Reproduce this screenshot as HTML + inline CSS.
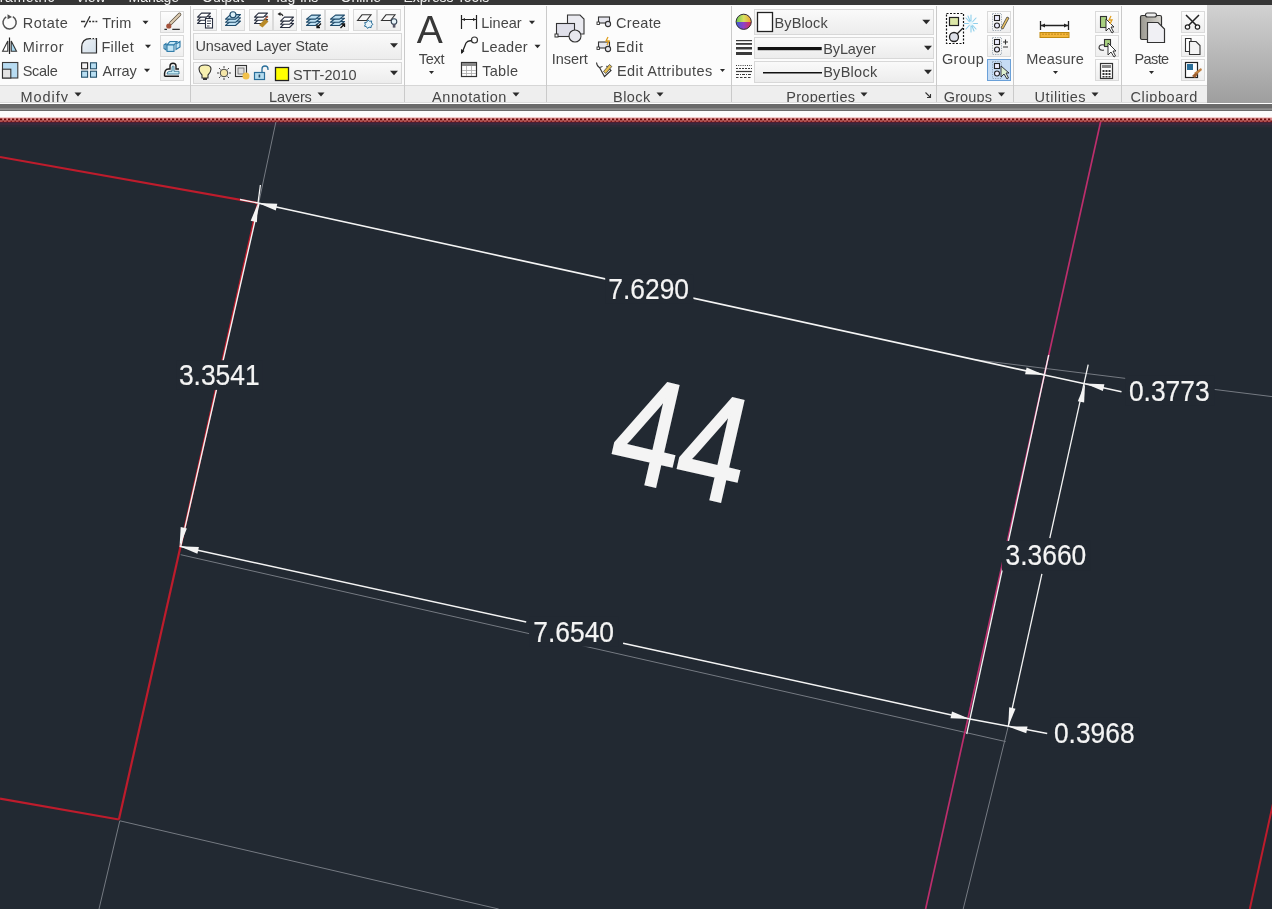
<!DOCTYPE html>
<html><head><meta charset="utf-8"><style>
html,body{margin:0;padding:0}
body{width:1272px;height:909px;overflow:hidden;position:relative;background:#222932;font-family:"Liberation Sans",sans-serif;}
.a{position:absolute}
</style></head><body>
<svg class="a" style="left:0;top:0;will-change:transform" width="1272" height="128" viewBox="0 0 1272 128" font-family="Liberation Sans"><defs><linearGradient id="bg" x1="0" y1="0" x2="0" y2="1"><stop offset="0" stop-color="#fdfdfd"/><stop offset="1" stop-color="#eeeeee"/></linearGradient><linearGradient id="cb" x1="0" y1="0" x2="0" y2="1"><stop offset="0" stop-color="#fafafa"/><stop offset="1" stop-color="#ececec"/></linearGradient><pattern id="rd" x="0" y="118" width="4" height="4" patternUnits="userSpaceOnUse"><rect x="0" y="0" width="4" height="4" fill="#d88888"/><rect x="0" y="0.5" width="2.2" height="2" fill="#6a0808"/><rect x="2.2" y="2.5" width="1.8" height="1.5" fill="#7a1818"/><rect x="0" y="2.5" width="2.2" height="1.5" fill="#b05050"/></pattern><linearGradient id="gr" x1="0" y1="0" x2="0" y2="1"><stop offset="0" stop-color="#d2d2d2"/><stop offset="1" stop-color="#9e9e9e"/></linearGradient><clipPath id="rc"><rect x="0" y="0" width="1272" height="128"/></clipPath></defs><g clip-path="url(#rc)"><rect x="0" y="0" width="1272" height="122" fill="#ffffff" /><rect x="0" y="5" width="1272" height="98" fill="#fcfcfc" /><rect x="0" y="85" width="1207" height="18" fill="#eeeeee" /><rect x="0" y="85" width="1207" height="1" fill="#d6d6d6" /><rect x="0" y="102" width="1207" height="1" fill="#dcdcdc" /><rect x="1207" y="5" width="65" height="98" fill="url(#gr)" /><rect x="0" y="0" width="1272" height="5" fill="#363636" /><text x="-18.6" y="1.9" font-size="14" fill="#f0f0f0" letter-spacing="0.6" >Parametric</text><text x="75.5" y="1.9" font-size="14" fill="#f0f0f0" letter-spacing="0" >View</text><text x="128.5" y="1.9" font-size="14" fill="#f0f0f0" letter-spacing="0" >Manage</text><text x="202" y="1.9" font-size="14" fill="#f0f0f0" letter-spacing="0" >Output</text><text x="267" y="1.9" font-size="14" fill="#f0f0f0" letter-spacing="0.1" >Plug-ins</text><text x="340.5" y="1.9" font-size="14" fill="#f0f0f0" letter-spacing="0" >Online</text><text x="403.5" y="1.9" font-size="14" fill="#f0f0f0" letter-spacing="-0.1" >Express Tools</text><rect x="190" y="6" width="1" height="97" fill="#cacaca" /><rect x="404" y="6" width="1" height="97" fill="#cacaca" /><rect x="546" y="6" width="1" height="97" fill="#cacaca" /><rect x="731" y="6" width="1" height="97" fill="#cacaca" /><rect x="936" y="6" width="1" height="97" fill="#cacaca" /><rect x="1013" y="6" width="1" height="97" fill="#cacaca" /><rect x="1121" y="6" width="1" height="97" fill="#cacaca" /><path d="M6.2,16.8 A6.6,6.6 0 1 0 12.8,16.7" fill="none" stroke="#505050" stroke-width="1.5"/><polygon points="7.5,14.2 12,17 7.6,19.2" fill="#505050"/><text x="22.7" y="27.6" font-size="14.5" fill="#464646" letter-spacing="0.48" >Rotate</text><path d="M9.5,37.5 L9.5,54" stroke="#222" stroke-width="1.2"/><path d="M7.8,41 L2.6,51.3 L7.8,51.3 Z" fill="#fff" stroke="#333" stroke-width="1.1"/><path d="M11.2,41 L16.5,51.3 L11.2,51.3 Z" fill="#a8d8f0" stroke="#333" stroke-width="1.1"/><text x="22.7" y="51.5" font-size="14.5" fill="#464646" letter-spacing="0.6" >Mirror</text><rect x="2.5" y="62.5" width="15.3" height="15.5" fill="#b8dcf2" stroke="#3a3a3a" stroke-width="1.1"/><rect x="2.5" y="69.2" width="8.3" height="8.8" fill="#e4e4e4" stroke="#333" stroke-width="1.1"/><text x="22.7" y="75.7" font-size="14.5" fill="#464646" letter-spacing="-0.3" >Scale</text><path d="M81,21.5 L85.2,21.5 M90,16.2 L84.3,27.4 M89,21.5 L91,21.5 M92.3,21.5 L94.3,21.5 M95.5,21.5 L97.3,21.5" stroke="#333" stroke-width="1.3" fill="none"/><text x="102.2" y="27.6" font-size="14.5" fill="#464646" letter-spacing="0.267" >Trim</text><polygon points="142.5,20.75 148.5,20.75 145.5,24.25" fill="#2a2a2a"/><defs><linearGradient id="fl" x1="0" y1="0" x2="1" y2="1"><stop offset="0" stop-color="#eef2f6"/><stop offset="1" stop-color="#d2dfea"/></linearGradient></defs><path d="M81.7,53 L81.7,47 Q82,38.7 90,38.7 L96.5,38.7 L96.5,53 Z" fill="url(#fl)" stroke="#2a2a2a" stroke-width="1.2"/><path d="M89.5,38.7 L96.5,38.7" stroke="#fff" stroke-width="1.2" stroke-dasharray="0,1.6,1.4,0"/><text x="101.4" y="51.5" font-size="14.5" fill="#464646" letter-spacing="0.36" >Fillet</text><polygon points="145.0,44.75 151.0,44.75 148,48.25" fill="#2a2a2a"/><g fill="#b8def2" stroke="#24506a" stroke-width="1.1"><rect x="90.5" y="62.8" width="6" height="6"/><rect x="81.6" y="71.2" width="6" height="6"/><rect x="90.5" y="71.2" width="6" height="6"/></g><rect x="81.6" y="62.8" width="6" height="6" fill="#f4f4f4" stroke="#222" stroke-width="1.1"/><text x="102.4" y="75.7" font-size="14.5" fill="#464646" letter-spacing="-0.05" >Array</text><polygon points="144.0,68.75 150.0,68.75 147,72.25" fill="#2a2a2a"/><rect x="160.5" y="11.5" width="23" height="21" fill="url(#bg)" stroke="#dadada" stroke-width="1"/><rect x="160.5" y="35.5" width="23" height="21" fill="url(#bg)" stroke="#dadada" stroke-width="1"/><rect x="160.5" y="59.5" width="23" height="21" fill="url(#bg)" stroke="#dadada" stroke-width="1"/><path d="M171,23 L179.5,14.5" stroke="#5a5040" stroke-width="3.6" stroke-linecap="round"/><path d="M171,23 L179.5,14.5" stroke="#dccbb0" stroke-width="2.2" stroke-linecap="round"/><circle cx="168.8" cy="26" r="2.6" fill="#a4523a"/><path d="M164.4,29.4 L167,29.4 M172.3,29.4 L179.8,29.4" stroke="#333" stroke-width="1.1"/><g fill="#c4e6f6" stroke="#2a78a6" stroke-width="1.1"><rect x="167" y="44.8" width="7" height="6.6"/><path d="M167,44.8 L170,41.5 L177,41.5 L174,44.8 Z"/><path d="M164,45 L166,43.5 L166,50 L164,48.5 Z"/><path d="M176,44 L180,41.5 L180,47 L176,49.5 Z"/></g><path d="M164.5,76.3 L179,76.3 M164.5,76.3 Q164,69 168.5,69 L170,69 L170,66 Q170,63.2 173,63.2 Q176,63.2 176,66 L176,69 L179,69" fill="none" stroke="#1a1a1a" stroke-width="1.4"/><path d="M167,74 Q167,71.3 170,71.3 L172,71.3 L172,68 Q172,65.5 173.5,66 Q174,66 174,68 L174,71.3 L179,71.3 L179,74 Z" fill="#c8ecf4" stroke="#2a6a8a" stroke-width="0.8"/><text x="20.4" y="101.5" font-size="14.5" fill="#464646" letter-spacing="1.0" >Modify</text><polygon points="74.5,92.5 81.5,92.5 78,96.5" fill="#2a2a2a"/><rect x="193.5" y="9.5" width="23" height="21" fill="url(#bg)" stroke="#dadada" stroke-width="1"/><rect x="221.5" y="9.5" width="23" height="21" fill="url(#bg)" stroke="#dadada" stroke-width="1"/><rect x="249.5" y="9.5" width="23" height="21" fill="url(#bg)" stroke="#dadada" stroke-width="1"/><rect x="273.5" y="9.5" width="23" height="21" fill="url(#bg)" stroke="#dadada" stroke-width="1"/><rect x="301.5" y="9.5" width="23" height="21" fill="url(#bg)" stroke="#dadada" stroke-width="1"/><rect x="325.5" y="9.5" width="23" height="21" fill="url(#bg)" stroke="#dadada" stroke-width="1"/><rect x="353.5" y="9.5" width="23" height="21" fill="url(#bg)" stroke="#dadada" stroke-width="1"/><rect x="377.5" y="9.5" width="23" height="21" fill="url(#bg)" stroke="#dadada" stroke-width="1"/><path d="M197.5,23.5 L206.5,23.5 L210.5,19.5 L201.5,19.5 Z" fill="#fff" stroke="#2a3040" stroke-width="1.1" stroke-linejoin="round"/><path d="M197.5,20.3 L206.5,20.3 L210.5,16.3 L201.5,16.3 Z" fill="#fff" stroke="#2a3040" stroke-width="1.1" stroke-linejoin="round"/><path d="M197.5,17.1 L206.5,17.1 L210.5,13.100000000000001 L201.5,13.100000000000001 Z" fill="#fff" stroke="#2a3040" stroke-width="1.1" stroke-linejoin="round"/><rect x="205.5" y="18.5" width="7" height="9.5" fill="#fff" stroke="#2a3040" stroke-width="1.1"/><path d="M207,21 L211,21 M207,23.5 L211,23.5 M207,26 L209.5,26" stroke="#2a3040" stroke-width="0.9"/><path d="M225.5,25.5 L235.5,25.5 L240.5,21.0 L230.5,21.0 Z" fill="#bfe0f2" stroke="#1e4a6a" stroke-width="1.1" stroke-linejoin="round"/><path d="M225.5,22.3 L235.5,22.3 L240.5,17.8 L230.5,17.8 Z" fill="#bfe0f2" stroke="#1e4a6a" stroke-width="1.1" stroke-linejoin="round"/><path d="M225.5,19.1 L235.5,19.1 L240.5,14.600000000000001 L230.5,14.600000000000001 Z" fill="#bfe0f2" stroke="#1e4a6a" stroke-width="1.1" stroke-linejoin="round"/><circle cx="233" cy="14.8" r="3" fill="#d8eef8" stroke="#1e4a6a" stroke-width="1.1"/><path d="M254.5,23.5 L263.5,23.5 L267.5,19.5 L258.5,19.5 Z" fill="#fff" stroke="#2a3040" stroke-width="1.1" stroke-linejoin="round"/><path d="M254.5,20.3 L263.5,20.3 L267.5,16.3 L258.5,16.3 Z" fill="#fff" stroke="#2a3040" stroke-width="1.1" stroke-linejoin="round"/><path d="M254.5,17.1 L263.5,17.1 L267.5,13.100000000000001 L258.5,13.100000000000001 Z" fill="#fff" stroke="#2a3040" stroke-width="1.1" stroke-linejoin="round"/><path d="M259,25 L265,19 L268.5,21.5 L262.5,27.5 Z" fill="#b88a28"/><path d="M265,19 L268,16.5" stroke="#c06040" stroke-width="1.2"/><path d="M280.5,27.5 L289.5,27.5 L293.5,23.5 L284.5,23.5 Z" fill="#fff" stroke="#2a3040" stroke-width="1.1" stroke-linejoin="round"/><path d="M280.5,24.3 L289.5,24.3 L293.5,20.3 L284.5,20.3 Z" fill="#fff" stroke="#2a3040" stroke-width="1.1" stroke-linejoin="round"/><path d="M280.5,21.1 L289.5,21.1 L293.5,17.1 L284.5,17.1 Z" fill="#fff" stroke="#2a3040" stroke-width="1.1" stroke-linejoin="round"/><path d="M283,16 Q282,13.5 279,14" fill="none" stroke="#222" stroke-width="1.1"/><polygon points="277.5,14 280.5,12 280.5,16" fill="#222"/><path d="M306.5,25.5 L315.5,25.5 L320.5,21.5 L311.5,21.5 Z" fill="#bfe0f2" stroke="#1e4a6a" stroke-width="1.1" stroke-linejoin="round"/><path d="M306.5,22.3 L315.5,22.3 L320.5,18.3 L311.5,18.3 Z" fill="#bfe0f2" stroke="#1e4a6a" stroke-width="1.1" stroke-linejoin="round"/><path d="M306.5,19.1 L315.5,19.1 L320.5,15.100000000000001 L311.5,15.100000000000001 Z" fill="#bfe0f2" stroke="#1e4a6a" stroke-width="1.1" stroke-linejoin="round"/><path d="M321,23.5 L317,27.5 M317,24.5 L317,27.5 L320,27.5" stroke="#111" stroke-width="1.3" fill="none"/><path d="M330.5,25.5 L339.5,25.5 L344.5,21.5 L335.5,21.5 Z" fill="#bfe0f2" stroke="#1e4a6a" stroke-width="1.1" stroke-linejoin="round"/><path d="M330.5,22.3 L339.5,22.3 L344.5,18.3 L335.5,18.3 Z" fill="#bfe0f2" stroke="#1e4a6a" stroke-width="1.1" stroke-linejoin="round"/><path d="M330.5,19.1 L339.5,19.1 L344.5,15.100000000000001 L335.5,15.100000000000001 Z" fill="#bfe0f2" stroke="#1e4a6a" stroke-width="1.1" stroke-linejoin="round"/><path d="M340.5,28 L344.5,24 M341.5,24 L344.5,24 L344.5,27" stroke="#111" stroke-width="1.3" fill="none"/><path d="M357.5,20.5 L362,14.8 L371,14.8 L366.5,20.5 Z" fill="none" stroke="#333" stroke-width="1.1"/><path d="M368,20 l1.6,1.3 l2,-0.4 l-0.1,2 l1.4,1.5 l-1.6,1.2 l-0.2,2 l-2,-0.4 l-1.6,1.2 l-1,-1.7 l-2,-0.5 l0.8,-1.8 l-0.6,-1.9 l2,-0.2 Z" fill="#e8f4fa" stroke="#2a6f9a" stroke-width="1"/><path d="M381.5,20.5 L386,14.8 L395,14.8 L390.5,20.5 Z" fill="none" stroke="#333" stroke-width="1.1"/><circle cx="394" cy="21.5" r="2.8" fill="#e8f4fa" stroke="#345" stroke-width="1.1"/><rect x="392.8" y="24" width="2.6" height="3.6" fill="#556"/><rect x="193.5" y="33.5" width="208" height="26" fill="url(#cb)" stroke="#d8d8d8" stroke-width="1"/><text x="195.5" y="51.4" font-size="14.5" fill="#464646" letter-spacing="-0.134" >Unsaved Layer State</text><polygon points="390.0,43.25 398.0,43.25 394,47.75" fill="#2a2a2a"/><rect x="193.5" y="62.5" width="208" height="21" fill="url(#cb)" stroke="#d8d8d8" stroke-width="1"/><path d="M202,78 L202,75 Q199,72 199,69 Q199,65 205,65 Q211,65 211,69 Q211,72 208,75 L208,78 Z" fill="#f8f0b0" stroke="#333" stroke-width="1.1"/><rect x="203" y="78" width="4" height="2" fill="#333"/><circle cx="224" cy="73" r="3.8" fill="#f5e6a8" stroke="#444" stroke-width="1"/><g stroke="#444" stroke-width="1"><path d="M224,66 L224,68 M224,78 L224,80 M217,73 L219,73 M229,73 L231,73 M219,68 L220.5,69.5 M227.5,76.5 L229,78 M229,68 L227.5,69.5 M219,78 L220.5,76.5"/></g><rect x="235.5" y="65.5" width="11" height="11" fill="#eee" stroke="#333" stroke-width="1.1"/><rect x="238" y="68" width="6" height="6" fill="#ddd" stroke="#666" stroke-width="0.8"/><circle cx="246" cy="76" r="3.5" fill="#f2c14a"/><rect x="254.5" y="72.5" width="10" height="7" fill="#b5dcef" stroke="#2a6f9a" stroke-width="1.2"/><path d="M262,72 L262,69 Q262,66 265,66 Q268,66 268,69 L268,70" fill="none" stroke="#2a6f9a" stroke-width="1.3"/><rect x="258.6" y="74.5" width="1.6" height="3" fill="#2a4f6a"/><rect x="275.5" y="67.5" width="13" height="13" fill="#ffff00" stroke="#222" stroke-width="1.3"/><text x="293.0" y="80.4" font-size="14.5" fill="#464646" letter-spacing="0.0" >STT-2010</text><polygon points="390.0,70.75 398.0,70.75 394,75.25" fill="#2a2a2a"/><text x="269.1" y="101.5" font-size="14.5" fill="#464646" letter-spacing="-0.16" >Layers</text><polygon points="317.5,92.5 324.5,92.5 321,96.5" fill="#2a2a2a"/><text x="416.8" y="42.9" font-size="39" fill="#383838" letter-spacing="0" >A</text><text x="418.7" y="63.5" font-size="14.5" fill="#464646" letter-spacing="-0.267" >Text</text><polygon points="429.0,71.0 434.0,71.0 431.5,74.0" fill="#2a2a2a"/><path d="M461.5,15 L461.5,29 M476.5,15 L476.5,29 M462,19.5 L476,19.5" stroke="#222" stroke-width="1.2" fill="none"/><path d="M462,19.5 L465,18 L465,21 Z M476,19.5 L473,18 L473,21 Z" fill="#222"/><text x="481.2" y="27.7" font-size="14.5" fill="#464646" letter-spacing="0.04" >Linear</text><polygon points="529.0,20.75 535.0,20.75 532,24.25" fill="#2a2a2a"/><path d="M462,53 L466,43 Q468,40 472,41" stroke="#222" stroke-width="1.3" fill="none"/><path d="M461,54 L461,49 L464.5,51 Z" fill="#222"/><circle cx="474.5" cy="40" r="3" fill="#fff" stroke="#333" stroke-width="1.2"/><text x="481.2" y="51.6" font-size="14.5" fill="#464646" letter-spacing="0.24" >Leader</text><polygon points="534.5,44.75 540.5,44.75 537.5,48.25" fill="#2a2a2a"/><rect x="461.5" y="62.5" width="15" height="14" fill="#fff" stroke="#333" stroke-width="1.2"/><rect x="462" y="63" width="14" height="3" fill="#888"/><path d="M462,70.5 L476,70.5 M462,73.5 L476,73.5 M466.5,66 L466.5,76 M471.5,66 L471.5,76" stroke="#aaa" stroke-width="0.8"/><text x="482.2" y="75.5" font-size="14.5" fill="#464646" letter-spacing="0.3" >Table</text><text x="432.1" y="101.5" font-size="14.5" fill="#464646" letter-spacing="0.556" >Annotation</text><polygon points="512.5,92.5 519.5,92.5 516,96.5" fill="#2a2a2a"/><path d="M567.5,15 L580,15 L584,19 L584,34 L567.5,34 Z" fill="#eaeaf0" stroke="#333" stroke-width="1.1"/><rect x="556.5" y="23.5" width="18" height="13" fill="#e0e0ea" stroke="#333" stroke-width="1.1"/><circle cx="575" cy="36" r="6" fill="#e8e8ee" stroke="#333" stroke-width="1.1"/><rect x="555" y="34" width="3" height="3" fill="#fff" stroke="#333" stroke-width="1"/><text x="551.7" y="63.7" font-size="14.5" fill="#464646" letter-spacing="-0.04" >Insert</text><rect x="598.5" y="17" width="11" height="6" fill="#e6e6ee" stroke="#333" stroke-width="1.1"/><circle cx="608" cy="24" r="2.6" fill="#e6e6ee" stroke="#333" stroke-width="1.1"/><rect x="597" y="22" width="2.5" height="2.5" fill="#fff" stroke="#333" stroke-width="0.9"/><text x="616.0" y="27.5" font-size="14.5" fill="#464646" letter-spacing="0.32" >Create</text><rect x="598.5" y="42" width="11" height="6" fill="#e6e6ee" stroke="#333" stroke-width="1.1"/><circle cx="608" cy="49" r="2.6" fill="#e6e6ee" stroke="#333" stroke-width="1.1"/><rect x="597" y="47" width="2.5" height="2.5" fill="#fff" stroke="#333" stroke-width="0.9"/><path d="M608,37 L606,41 L609,41 L607,45" stroke="#e0a020" stroke-width="1.3" fill="none"/><text x="616.0" y="51.6" font-size="14.5" fill="#464646" letter-spacing="0.667" >Edit</text><path d="M596.5,62.5 Q597,66.5 599.5,67.5 L604.5,76.5 L611,70.5 L606.5,66" fill="none" stroke="#333" stroke-width="1.1"/><path d="M603.5,71.5 L609.5,64.5 L611.8,66.5 L605.8,73.5 Z" fill="#e8c050" stroke="#444" stroke-width="0.8"/><path d="M599.5,67.5 L602.5,66.5" stroke="#333" stroke-width="1"/><text x="617.0" y="75.5" font-size="14.5" fill="#464646" letter-spacing="0.414" >Edit Attributes</text><polygon points="720.0,69.0 725.0,69.0 722.5,72.0" fill="#2a2a2a"/><text x="613.1" y="101.5" font-size="14.5" fill="#464646" letter-spacing="0.4" >Block</text><polygon points="656.5,92.5 663.5,92.5 660,96.5" fill="#2a2a2a"/><defs><linearGradient id="cw" x1="0" y1="0" x2="0" y2="1"><stop offset="0" stop-color="#8fd060"/><stop offset="0.35" stop-color="#f0c040"/><stop offset="0.5" stop-color="#e04040"/><stop offset="0.75" stop-color="#7040c0"/><stop offset="1" stop-color="#4060d0"/></linearGradient></defs><defs><linearGradient id="cwt" x1="0" y1="0" x2="1" y2="0"><stop offset="0" stop-color="#6ac850"/><stop offset="0.5" stop-color="#d8e060"/><stop offset="1" stop-color="#f0a030"/></linearGradient><linearGradient id="cwb" x1="0" y1="0" x2="1" y2="0"><stop offset="0" stop-color="#3a60d0"/><stop offset="0.5" stop-color="#9040c8"/><stop offset="1" stop-color="#e03040"/></linearGradient></defs><circle cx="743.7" cy="21.8" r="7.6" fill="url(#cwb)"/><path d="M736.1,22.1 A7.6,7.6 0 0 1 751.3,22.1 Z" fill="url(#cwt)"/><circle cx="743.7" cy="21.8" r="7.6" fill="none" stroke="#333" stroke-width="1"/><rect x="754.5" y="9.5" width="179" height="25" fill="url(#cb)" stroke="#d8d8d8" stroke-width="1"/><rect x="754.5" y="37.5" width="179" height="21" fill="url(#cb)" stroke="#d8d8d8" stroke-width="1"/><rect x="754.5" y="61.5" width="179" height="21" fill="url(#cb)" stroke="#d8d8d8" stroke-width="1"/><rect x="757.5" y="12.5" width="15" height="19" fill="#fff" stroke="#222" stroke-width="1.3"/><text x="774.4" y="27.8" font-size="14.5" fill="#464646" letter-spacing="0.167" >ByBlock</text><polygon points="922.3,19.75 930.3,19.75 926.3,24.25" fill="#2a2a2a"/><g fill="#3a3a3a"><rect x="736" y="40" width="16" height="1.2"/><rect x="736" y="43" width="16" height="1.8"/><rect x="736" y="47" width="16" height="2.5"/><rect x="736" y="52" width="16" height="3"/></g><rect x="757.7" y="47" width="64" height="3.2" fill="#111" /><text x="823.2" y="53.8" font-size="14.5" fill="#464646" letter-spacing="-0.1" >ByLayer</text><polygon points="924.0,45.75 932.0,45.75 928,50.25" fill="#2a2a2a"/><g stroke="#3a3a3a" stroke-width="1.2"><path d="M736,65.5 L752,65.5" stroke-dasharray="1,1.2"/><path d="M736,68.5 L752,68.5" stroke-dasharray="2,1"/><path d="M736,71.5 L752,71.5"/><path d="M736,74.5 L752,74.5" stroke-dasharray="3,1,1,1"/><path d="M736,77.5 L752,77.5" stroke-dasharray="2.5,1.5"/></g><rect x="763" y="72" width="59" height="1.5" fill="#111" /><text x="823.2" y="77.4" font-size="14.5" fill="#464646" letter-spacing="0.266" >ByBlock</text><polygon points="924.0,69.75 932.0,69.75 928,74.25" fill="#2a2a2a"/><text x="786.3" y="101.5" font-size="14.5" fill="#464646" letter-spacing="0.289" >Properties</text><polygon points="860.5,92.5 867.5,92.5 864,96.5" fill="#2a2a2a"/><path d="M925.5,92.5 L930.5,97.5 M930.5,94 L930.5,97.5 L927,97.5" stroke="#333" stroke-width="1.1" fill="none"/><rect x="946.5" y="13.5" width="17" height="30" fill="none" stroke="#111" stroke-width="1.2" stroke-dasharray="2,1.5"/><rect x="949.5" y="17.5" width="9" height="8" fill="#dde8a8" stroke="#222" stroke-width="1.2"/><circle cx="954" cy="37" r="4.5" fill="#dde0e8" stroke="#222" stroke-width="1.3"/><path d="M957,34 L963,28" stroke="#222" stroke-width="1.2"/><g stroke="#8fd0ec" stroke-width="1.1" stroke-linecap="round"><path d="M964.5,23.5 L977.5,23.5 M971,15 L971,32 M966,18 L976,29 M976,18 L966,29 M968,16 L974,31"/></g><circle cx="971" cy="23.5" r="2.2" fill="#e6f6fc"/><text x="941.9" y="63.5" font-size="14.5" fill="#464646" letter-spacing="0.4" >Group</text><rect x="987.5" y="11.5" width="23" height="21" fill="url(#bg)" stroke="#dadada" stroke-width="1"/><rect x="987.5" y="35.5" width="23" height="21" fill="url(#bg)" stroke="#dadada" stroke-width="1"/><rect x="987.5" y="59.5" width="23" height="21" fill="#c6dcf4" stroke="#6aa0d8" stroke-width="1"/><rect x="992.5" y="13.5" width="9" height="17" fill="none" stroke="#7a8a9a" stroke-width="0.7" stroke-dasharray="1.2,1.2"/><rect x="994.5" y="15.5" width="5" height="5" fill="#eef" stroke="#222" stroke-width="1.1"/><circle cx="997" cy="25.5" r="2.5" fill="#eef" stroke="#222" stroke-width="1.1"/><path d="M1001,28 L1007,17 L1009,18 L1003,29 Z" fill="#e8c060" stroke="#444" stroke-width="0.8"/><rect x="992.5" y="37.5" width="9" height="17" fill="none" stroke="#7a8a9a" stroke-width="0.7" stroke-dasharray="1.2,1.2"/><rect x="994.5" y="39.5" width="5" height="5" fill="#eef" stroke="#222" stroke-width="1.1"/><circle cx="997" cy="49.5" r="2.5" fill="#eef" stroke="#222" stroke-width="1.1"/><path d="M1003,42 L1008,42 M1005.5,39.5 L1005.5,44.5 M1003,47 L1008,47" stroke="#333" stroke-width="1.1"/><rect x="992.5" y="61.5" width="9" height="17" fill="none" stroke="#7a8a9a" stroke-width="0.7" stroke-dasharray="1.2,1.2"/><rect x="994.5" y="63.5" width="5" height="5" fill="#eef" stroke="#222" stroke-width="1.1"/><circle cx="997" cy="73.5" r="2.5" fill="#eef" stroke="#222" stroke-width="1.1"/><path d="M1001,66 L1001,77 L1004,74 L1007,79 L1008.5,78 L1006,73 L1009,73 Z" fill="#dff0d0" stroke="#223" stroke-width="0.9"/><text x="943.7" y="101.5" font-size="14.5" fill="#464646" letter-spacing="0.16" >Groups</text><polygon points="998.0,92.5 1005.0,92.5 1001.5,96.5" fill="#2a2a2a"/><path d="M1040.5,21 L1040.5,30 M1068.5,21 L1068.5,30 M1041,25.5 L1068,25.5" stroke="#222" stroke-width="1.3"/><path d="M1041,25.5 L1045,23.5 L1045,27.5 Z M1068,25.5 L1064,23.5 L1064,27.5 Z" fill="#222"/><rect x="1040" y="32.5" width="29" height="5" fill="#f2b53a" stroke="#c08a10" stroke-width="1"/><path d="M1043,33.5 L1043,35 M1046,33.5 L1046,35 M1049,33.5 L1049,35 M1052,33.5 L1052,35 M1055,33.5 L1055,35 M1058,33.5 L1058,35 M1061,33.5 L1061,35 M1064,33.5 L1064,35 M1067,33.5 L1067,35" stroke="#b07a10" stroke-width="1"/><text x="1026.3" y="63.5" font-size="14.5" fill="#464646" letter-spacing="0.2" >Measure</text><polygon points="1053.0,71.0 1058.0,71.0 1055.5,74.0" fill="#2a2a2a"/><rect x="1095.5" y="11.5" width="23" height="21" fill="url(#bg)" stroke="#dadada" stroke-width="1"/><rect x="1095.5" y="35.5" width="23" height="21" fill="url(#bg)" stroke="#dadada" stroke-width="1"/><rect x="1095.5" y="59.5" width="23" height="21" fill="url(#bg)" stroke="#dadada" stroke-width="1"/><rect x="1100.5" y="16.5" width="6" height="11" fill="#a8d080" stroke="#333" stroke-width="1.1"/><path d="M1106,19 L1106,31 L1109,28 L1112,33 L1113.5,32 L1111,27 L1114,27 Z" fill="#fff" stroke="#222" stroke-width="0.9"/><path d="M1111,16 L1109,20 L1112,20 L1110,24" stroke="#e0a020" stroke-width="1.3" fill="none"/><rect x="1104.5" y="39.5" width="6" height="7" fill="#a8d080" stroke="#333" stroke-width="1.1"/><path d="M1104,45 Q1099,44 1099,48 Q1100,51 1104,50" fill="none" stroke="#333" stroke-width="1.1"/><path d="M1108,43 L1108,55 L1111,52 L1114,57 L1115.5,56 L1113,51 L1116,51 Z" fill="#fff" stroke="#222" stroke-width="0.9"/><rect x="1100.5" y="63.5" width="12" height="15" fill="#fff" stroke="#333" stroke-width="1.2"/><rect x="1102" y="65" width="9" height="3" fill="#888"/><g fill="#333"><rect x="1102.5" y="70" width="2" height="2"/><rect x="1105.5" y="70" width="2" height="2"/><rect x="1108.5" y="70" width="2" height="2"/><rect x="1102.5" y="73" width="2" height="2"/><rect x="1105.5" y="73" width="2" height="2"/><rect x="1108.5" y="73" width="2" height="2"/><rect x="1102.5" y="76" width="2" height="1.5"/><rect x="1105.5" y="76" width="2" height="1.5"/><rect x="1108.5" y="76" width="2" height="1.5"/></g><text x="1034.6" y="101.5" font-size="14.5" fill="#464646" letter-spacing="0.525" >Utilities</text><polygon points="1091.5,92.5 1098.5,92.5 1095,96.5" fill="#2a2a2a"/><defs><linearGradient id="cl" x1="0" y1="0" x2="1" y2="0"><stop offset="0" stop-color="#9a9890"/><stop offset="1" stop-color="#d8d6d0"/></linearGradient></defs><rect x="1140.5" y="15.5" width="21" height="24" rx="1.5" fill="url(#cl)" stroke="#333" stroke-width="1.2"/><rect x="1145.5" y="13" width="11" height="4" rx="2" fill="#eee" stroke="#333" stroke-width="1.1"/><path d="M1147.5,22.5 L1158,22.5 L1164.5,29 L1164.5,42.5 L1147.5,42.5 Z" fill="#f0f0f4" stroke="#333" stroke-width="1.2"/><text x="1134.6" y="63.6" font-size="14.5" fill="#464646" letter-spacing="-0.65" >Paste</text><polygon points="1149.0,71.0 1154.0,71.0 1151.5,74.0" fill="#2a2a2a"/><rect x="1181.5" y="11.5" width="23" height="21" fill="url(#bg)" stroke="#dadada" stroke-width="1"/><rect x="1181.5" y="35.5" width="23" height="21" fill="url(#bg)" stroke="#dadada" stroke-width="1"/><rect x="1181.5" y="59.5" width="23" height="21" fill="url(#bg)" stroke="#dadada" stroke-width="1"/><path d="M1186,15 L1199,28 M1199,15 L1186,28" stroke="#222" stroke-width="1.5"/><circle cx="1187.5" cy="27" r="2.2" fill="#fff" stroke="#222" stroke-width="1.2"/><circle cx="1197.5" cy="27" r="2.2" fill="#fff" stroke="#222" stroke-width="1.2"/><path d="M1185.5,38.5 L1191,38.5 L1191,51.5 L1185.5,51.5 Z" fill="#fff" stroke="#333" stroke-width="1.1"/><path d="M1189.5,41.5 L1196,41.5 L1200,45.5 L1200,54.5 L1189.5,54.5 Z" fill="#f4f4f4" stroke="#333" stroke-width="1.1"/><rect x="1185.5" y="62.5" width="12" height="15" fill="#fff" stroke="#222" stroke-width="1.2"/><rect x="1187" y="64" width="6" height="6" fill="#2a6f9a"/><path d="M1194,73 L1201,68 L1202,70 L1196,75 Z" fill="#c08040"/><path d="M1192,76 Q1195,72 1198,74 L1195,78 Z" fill="#a06030"/><text x="1130.5" y="101.5" font-size="14.5" fill="#464646" letter-spacing="0.6" >Clipboard</text><rect x="0" y="103" width="1272" height="1" fill="#ffffff" /><rect x="0" y="104" width="1272" height="7" fill="#6b6b6b" /><rect x="0" y="108.6" width="1272" height="1" fill="#a9a9a9" /><rect x="0" y="111" width="1272" height="7" fill="#fbfbfb" /><rect x="0" y="117" width="1272" height="1" fill="#f2cccc" /><rect x="0" y="118" width="1272" height="4" fill="url(#rd)" /><rect x="0" y="122" width="1272" height="1" fill="#4a1e34" /><rect x="0" y="123" width="1272" height="2" fill="#36293c" /><rect x="0" y="125" width="1272" height="2" fill="#2a2a36" /><rect x="0" y="127" width="1272" height="1" fill="#242a32" /><rect x="0" y="102" width="1207" height="1" fill="#dcdcdc" /></g></svg>
<svg class="a" style="left:0;top:0;will-change:transform" width="1272" height="909" viewBox="0 0 1272 909"><defs><clipPath id="cp"><rect x="0" y="122" width="1272" height="787"/></clipPath></defs><g clip-path="url(#cp)"><line x1="276.3" y1="120.0" x2="258.7" y2="203.1" stroke="#757a82" stroke-width="1" /><line x1="972.0" y1="359.3" x2="1272.0" y2="396.6" stroke="#757a82" stroke-width="1" /><line x1="180.7" y1="554.7" x2="1005.7" y2="741.6" stroke="#757a82" stroke-width="1" /><line x1="1008.2" y1="726.5" x2="963.2" y2="909.0" stroke="#757a82" stroke-width="1" /><line x1="119.8" y1="820.8" x2="498.7" y2="909.0" stroke="#757a82" stroke-width="1" /><line x1="119.8" y1="820.8" x2="99.0" y2="909.0" stroke="#757a82" stroke-width="1" /><line x1="0.0" y1="157.0" x2="258.0" y2="203.0" stroke="#be1c2c" stroke-width="2.2" /><line x1="258.0" y1="203.0" x2="118.9" y2="819.5" stroke="#be1c2c" stroke-width="2.2" /><line x1="0.0" y1="798.6" x2="118.9" y2="819.5" stroke="#be1c2c" stroke-width="2.2" /><line x1="1101.0" y1="120.0" x2="925.6" y2="909.0" stroke="#bc2e6c" stroke-width="1.7" /><line x1="1276.0" y1="790.0" x2="1249.8" y2="909.0" stroke="#be1c2c" stroke-width="2" /><line x1="259.1" y1="203.0" x2="180.7" y2="546.3" stroke="#f4f4f4" stroke-width="1.4" /><line x1="258.0" y1="203.0" x2="1044.4" y2="374.9" stroke="#f4f4f4" stroke-width="1.6" /><line x1="1044.4" y1="374.9" x2="1121.5" y2="391.7" stroke="#f4f4f4" stroke-width="1.5" /><line x1="179.6" y1="546.3" x2="526.2" y2="622.0" stroke="#f4f4f4" stroke-width="1.5" /><line x1="623.1" y1="643.2" x2="969.8" y2="718.9" stroke="#f4f4f4" stroke-width="1.5" /><line x1="969.8" y1="718.9" x2="1047.2" y2="733.4" stroke="#f4f4f4" stroke-width="1.5" /><line x1="260.4" y1="185.0" x2="258.0" y2="203.0" stroke="#f4f4f4" stroke-width="1.3" /><line x1="258.0" y1="203.0" x2="240.0" y2="199.5" stroke="#f4f4f4" stroke-width="1.3" /><line x1="1048.7" y1="355.0" x2="966.7" y2="734.0" stroke="#f4f4f4" stroke-width="1.3" /><line x1="1088.2" y1="364.7" x2="1049.8" y2="538.2" stroke="#f4f4f4" stroke-width="1.3" /><line x1="1041.9" y1="573.9" x2="1008.2" y2="726.5" stroke="#f4f4f4" stroke-width="1.3" /><polygon points="258.0,203.0 250.7,220.8 256.9,222.2" fill="#f4f4f4"/><polygon points="179.6,546.3 186.9,528.5 180.7,527.1" fill="#f4f4f4"/><polygon points="258.0,203.0 275.8,210.4 277.3,203.7" fill="#f4f4f4"/><polygon points="1044.4,374.9 1026.6,367.5 1025.1,374.2" fill="#f4f4f4"/><polygon points="1085.1,383.4 1102.9,390.9 1104.4,384.3" fill="#f4f4f4"/><polygon points="1085.1,383.4 1077.8,401.2 1084.1,402.6" fill="#f4f4f4"/><polygon points="1008.2,726.5 1015.5,708.7 1009.2,707.3" fill="#f4f4f4"/><polygon points="179.6,546.3 197.4,553.7 198.9,547.0" fill="#f4f4f4"/><polygon points="969.8,718.9 952.0,711.5 950.5,718.2" fill="#f4f4f4"/><polygon points="1008.2,726.5 1026.3,733.2 1027.5,726.5" fill="#f4f4f4"/><rect x="605.2" y="274.2" width="88.20000000000002" height="29.400000000000013" fill="#222932"/><rect x="176.89999999999998" y="360.2" width="85.6" height="29.700000000000024" fill="#222932"/><rect x="529.1" y="616.9000000000001" width="89.6" height="29.799999999999933" fill="#222932"/><rect x="1001.9000000000001" y="540.9000000000001" width="88.89999999999995" height="29.69999999999991" fill="#222932"/><rect x="1125.2" y="375.9" width="89.50000000000009" height="29.700000000000024" fill="#222932"/><rect x="1050.2" y="717.9000000000001" width="89.50000000000009" height="29.69999999999991" fill="#222932"/><text x="608.3" y="298.7" font-size="29" fill="#f4f4f4" stroke="#f4f4f4" stroke-width="0.2" font-family="Liberation Sans" transform="translate(608.3,298.7) scale(0.91,1) translate(-608.3,-298.7)">7.6290</text><text x="178.9" y="385.05" font-size="29" fill="#f4f4f4" stroke="#f4f4f4" stroke-width="0.2" font-family="Liberation Sans" transform="translate(178.9,385.05) scale(0.91,1) translate(-178.9,-385.05)">3.3541</text><text x="533.3" y="641.6" font-size="29" fill="#f4f4f4" stroke="#f4f4f4" stroke-width="0.2" font-family="Liberation Sans" transform="translate(533.3,641.6) scale(0.91,1) translate(-533.3,-641.6)">7.6540</text><text x="1005.55" y="565.45" font-size="29" fill="#f4f4f4" stroke="#f4f4f4" stroke-width="0.2" font-family="Liberation Sans" transform="translate(1005.55,565.45) scale(0.91,1) translate(-1005.55,-565.45)">3.3660</text><text x="1128.95" y="400.55" font-size="29" fill="#f4f4f4" stroke="#f4f4f4" stroke-width="0.2" font-family="Liberation Sans" transform="translate(1128.95,400.55) scale(0.91,1) translate(-1128.95,-400.55)">0.3773</text><text x="1053.95" y="742.55" font-size="29" fill="#f4f4f4" stroke="#f4f4f4" stroke-width="0.2" font-family="Liberation Sans" transform="translate(1053.95,742.55) scale(0.91,1) translate(-1053.95,-742.55)">0.3968</text><g transform="translate(605,475) rotate(12.9) scale(0.8,1)"><text x="0" y="0" font-size="150" fill="#f4f4f4" font-family="Liberation Sans" stroke="#f4f4f4" stroke-width="2.6">44</text></g></g></svg>
</body></html>
